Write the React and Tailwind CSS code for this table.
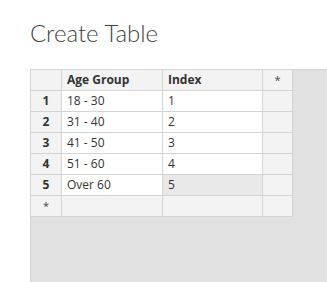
const rows = [
  ['1', '18 - 30', '1'],
  ['2', '31 - 40', '2'],
  ['3', '41 - 50', '3'],
  ['4', '51 - 60', '4'],
  ['5', 'Over 60', '5'],
]

const cell = 'h-[21px] border-r border-b border-[#d4d4d4] box-border flex items-center'

export default function App() {
  return (
    <div className="w-[327px] h-[282px] bg-white flex flex-col overflow-hidden text-[#333333]" style={{ fontFamily: '"Open Sans", "Noto Sans", sans-serif' }}>
      {/* Title */}
      <div className="h-[69px] pl-[30px] pt-[16px]">
        <h1 className="text-[24px] font-light leading-[34px] text-[#444444] font-['Lato','Open_Sans',sans-serif]">Create Table</h1>
      </div>

      {/* Grid area */}
      <div className="flex-1 ml-[30px] bg-[#e1e1e1] border-l border-t border-[#d4d4d4]">
        <div className="grid grid-cols-[31px_101px_100px_30px] text-[12px]">
          {/* Header */}
          <div className={`${cell} bg-[#f3f3f3]`} />
          <div className={`${cell} bg-[#f3f3f3] pl-[5px] font-bold`}>Age Group</div>
          <div className={`${cell} bg-[#f3f3f3] pl-[5px] font-bold`}>Index</div>
          <div className={`${cell} bg-[#f3f3f3] justify-center text-[11px] text-[#444444]`}>*</div>

          {rows.map(([n, group, idx]) => (
            <div key={n} className="contents">
              <div className={`${cell} bg-[#f3f3f3] justify-center font-bold`}>{n}</div>
              <div className={`${cell} bg-white pl-[5px]`}>{group}</div>
              <div className={`${cell} pl-[5px] ${n === '5' ? 'bg-[#e9e9e9]' : 'bg-white'}`}>{idx}</div>
              <div className={`${cell} bg-[#f3f3f3]`} />
            </div>
          ))}

          {/* New row */}
          <div className={`${cell} bg-[#f3f3f3] justify-center text-[11px] text-[#444444]`}>*</div>
          <div className={`${cell} bg-[#f3f3f3]`} />
          <div className={`${cell} bg-[#f3f3f3]`} />
          <div className={`${cell} bg-[#f3f3f3]`} />
        </div>
      </div>
    </div>
  )
}
